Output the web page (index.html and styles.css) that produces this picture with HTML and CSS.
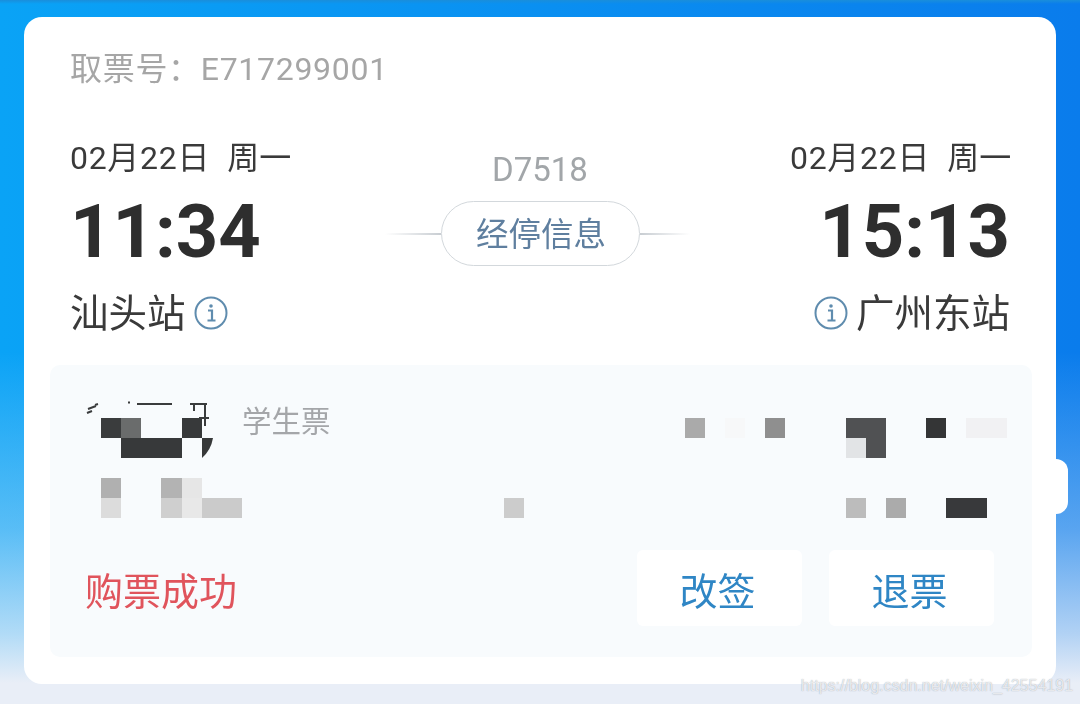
FILE: index.html
```html
<!DOCTYPE html>
<html lang="zh-CN">
<head>
    <meta charset="UTF-8">
    <meta name="viewport" content="width=device-width, initial-scale=1.0">
    <title>订单详情</title>
    <link rel="stylesheet" href="styles.css">
</head>
<body>
    <div class="card">
        <div class="ticketNo">取票号&#xFF1A;E717299001</div>

        <div class="route">
            <div class="stop">
                <div class="date"><span>02月22日</span><span>周一</span></div>
                <div class="time">11:34</div>
                <div class="station">汕头站
                    <svg class="info" viewBox="0 0 34 34"><circle cx="17" cy="17" r="15.5"/><path d="M14 14.5h4v10M13.5 24.5h8"/><circle class="dot" cx="17" cy="10" r="1.8"/></svg>
                </div>
            </div>

            <div class="train">
                <div class="trainNo">D7518</div>
                <div class="via">
                    <span class="line lineLeft"></span>
                    <span class="pill">经停信息</span>
                    <span class="line lineRight"></span>
                </div>
            </div>

            <div class="stop stopEnd">
                <div class="date"><span>02月22日</span><span>周一</span></div>
                <div class="time">15:13</div>
                <div class="station">
                    <svg class="info" viewBox="0 0 34 34"><circle cx="17" cy="17" r="15.5"/><path d="M14 14.5h4v10M13.5 24.5h8"/><circle class="dot" cx="17" cy="10" r="1.8"/></svg>
                    广州东站</div>
            </div>
        </div>

        <div class="panel">
            <div class="mosaic">
                <span class="ticketType">学生票</span>
                <i class="m1"></i><i class="m2"></i><i class="m3"></i><i class="m4"></i>
                <i class="m5"></i><i class="m6"></i><i class="m7"></i><i class="m8"></i>
                <i class="m9"></i><i class="m10"></i><i class="m11"></i><i class="m12"></i>
                <i class="m13"></i><i class="m14"></i><i class="m15"></i><i class="m16"></i>
                <i class="m17"></i><i class="m18"></i><i class="m19"></i><i class="m20"></i>
                <i class="m21"></i><i class="m22"></i><i class="m23"></i>
                <!-- bits of the name left over around the mosaic -->
                <svg class="scribble" viewBox="0 0 135 60">
                    <path d="M3 9l8-3M10 5l3-1M2 13l5-2M43 2.5h2M52 4h35M105 4h17M120 4v22M109 4v7M114 18h10"/>
                    <path class="fill" d="M117 38h11q-2 12-11 20z"/>
                </svg>
            </div>

            <div class="actions">
                <div class="status">购票成功</div>
                <div class="buttons">
                    <button class="btn">改签</button>
                    <button class="btn">退票</button>
                </div>
            </div>
        </div>
    </div>

    <div class="watermark">https://blog.csdn.net/weixin_42554191</div>
</body>
</html>
```

FILE: styles.css
```css
* {
    box-sizing: border-box;
}

html, body {
    height: 100%;
}

body {
    margin: 0;
    padding: 17px 24px 0;
    overflow: hidden;
    position: relative;
    font-family: Roboto, "Noto Sans CJK SC", sans-serif;
    color: #333;
    background:
        linear-gradient(180deg, #1a8edb 0, rgba(26, 142, 219, 0) 4px),
        linear-gradient(180deg, rgba(233, 238, 247, 0) 50%, rgba(233, 238, 247, 0.35) 75%, rgba(233, 238, 247, 0.75) 90%, #e9eef7 97%),
        linear-gradient(90deg, #0aa3f6, #0a7cec);
}

/* the source is a soft photo of a phone screen */
.card {
    position: relative;
    height: 667px;
    padding: 33px 24px 27px 26px;
    background-color: #fff;
    border-radius: 18px;
    filter: blur(0.4px);
}

/* half round notch on the right edge */
.card::after {
    content: "";
    position: absolute;
    top: 442px;
    right: -12px;
    width: 24px;
    height: 55px;
    background-color: #fff;
    border-radius: 15px;
}

.ticketNo {
    margin-left: 20px;
    font-size: 32px;
    line-height: 38px;
    letter-spacing: 0.7px;
    color: #a6a6a6;
}

.route {
    display: flex;
    justify-content: space-between;
    margin: 50px 22px 0 20px;
}

.stop {
    width: 222px;
}

.date {
    display: flex;
    gap: 17px;
    font-size: 32px;
    line-height: 40px;
    white-space: nowrap;
    color: #3a3a3a;
}

.date span:first-child {
    letter-spacing: 0.7px;
}

.stopEnd .date {
    margin-left: 2px;
}

.time {
    margin-top: 14px;
    font-size: 74px;
    font-weight: 700;
    line-height: 80px;
    color: #2e2e2e;
}

.station {
    display: flex;
    align-items: center;
    gap: 8px;
    margin-top: 20px;
    font-size: 38.5px;
    line-height: 44px;
    color: #3a3a3a;
}

.stopEnd .time {
    text-align: right;
}

.stopEnd .station {
    justify-content: flex-end;
    gap: 8px;
}

.info {
    width: 34px;
    height: 34px;
    margin-top: -2px;
    fill: none;
    stroke: #5f8cae;
    stroke-width: 2;
}

.info path {
    stroke-width: 2.2;
}

.info .dot {
    fill: #5f8cae;
    stroke: none;
}

.train {
    display: flex;
    flex-direction: column;
    align-items: center;
    margin: 12px 6px 0 0;
}

.trainNo {
    margin-left: 6px;
    font-size: 33px;
    line-height: 40px;
    color: #a2a6a9;
}

.via {
    display: flex;
    align-items: center;
    margin-top: 11px;
}

.line {
    width: 56px;
    height: 2px;
}

.lineLeft {
    background: linear-gradient(90deg, rgba(200, 205, 210, 0), #c8cdd2);
}

.lineRight {
    width: 50px;
    background: linear-gradient(90deg, #c8cdd2, rgba(200, 205, 210, 0));
}

.pill {
    width: 199px;
    height: 65px;
    padding: 3px 0 0 2px;
    font-size: 32.5px;
    line-height: 60px;
    text-align: center;
    color: #5f7f9f;
    border: 1.5px solid #d3d8dc;
    border-radius: 33px;
}

.panel {
    margin-top: 29px;
    height: 292px;
    padding-top: 53px;
    background-color: #f8fbfd;
    border-radius: 10px;
}

/* the blurred out passenger data */
.mosaic {
    position: relative;
    display: grid;
    grid-template-columns: repeat(46, 20.13px);
    grid-template-rows: repeat(5, 20px);
    margin-left: 51px;
}

.ticketType {
    grid-area: 1 / 8 / 2 / 14;
    margin-top: -10px;
    font-size: 29.5px;
    line-height: 29px;
    white-space: nowrap;
    color: #a4a6a9;
}

.m1 { grid-area: 1 / 1; background-color: #3a3c3d; }
.m2 { grid-area: 1 / 2; background-color: #6a6c6c; }
.m3 { grid-area: 2 / 2 / 3 / 5; background-color: #37393a; }
.m4 { grid-area: 1 / 5; background-color: #37393a; }
.m5 { grid-area: 4 / 1; background-color: #b0b0b0; }
.m6 { grid-area: 5 / 1; background-color: #dcdcdc; }
.m7 { grid-area: 4 / 4; background-color: #b3b3b3; }
.m8 { grid-area: 4 / 5; background-color: #e6e6e6; }
.m9 { grid-area: 5 / 4; background-color: #cfcfcf; }
.m10 { grid-area: 5 / 5; background-color: #e8e8e8; }
.m11 { grid-area: 5 / 6 / 6 / 8; background-color: #cbcbcb; }
.m12 { grid-area: 5 / 21; background-color: #ccc; }
.m13 { grid-area: 1 / 30; background-color: #aaa; }
.m14 { grid-area: 1 / 32; background-color: #f7f8f9; }
.m15 { grid-area: 1 / 34; background-color: #8f8f8f; }
.m16 { grid-area: 1 / 38 / 2 / 40; background-color: #505153; }
.m17 { grid-area: 2 / 38; background-color: #e2e4e6; }
.m18 { grid-area: 2 / 39; background-color: #505153; }
.m19 { grid-area: 1 / 42; background-color: #343536; }
.m20 { grid-area: 1 / 44 / 2 / 46; background-color: #f1f1f3; }
.m21 { grid-area: 5 / 38; background-color: #bcbcbc; }
.m22 { grid-area: 5 / 40; background-color: #ababab; }
.m23 { grid-area: 5 / 43 / 6 / 45; background-color: #38393b; }

.scribble {
    position: absolute;
    top: -18px;
    left: -16px;
    width: 135px;
    height: 60px;
    fill: none;
    stroke: #3a3c3d;
    stroke-width: 2;
}

.scribble .fill {
    fill: #37393a;
    stroke: none;
}

.actions {
    display: flex;
    justify-content: space-between;
    align-items: center;
    margin-top: 32px;
    padding: 0 38px 0 35px;
}

.status {
    font-size: 38px;
    color: #e0545c;
}

.buttons {
    display: flex;
    gap: 27px;
}

.btn {
    width: 165px;
    height: 76px;
    padding: 0 4px 0 0;
    font-family: inherit;
    font-size: 38px;
    color: #2f86c5;
    background-color: #fff;
    border: none;
    border-radius: 6px;
}

.watermark {
    position: absolute;
    top: 676px;
    right: 7px;
    font-family: "Liberation Sans", sans-serif;
    font-size: 16px;
    line-height: 20px;
    color: rgba(255, 255, 255, 0.75);
    text-shadow: 0 0 1px rgba(110, 120, 135, 0.7);
}
```
